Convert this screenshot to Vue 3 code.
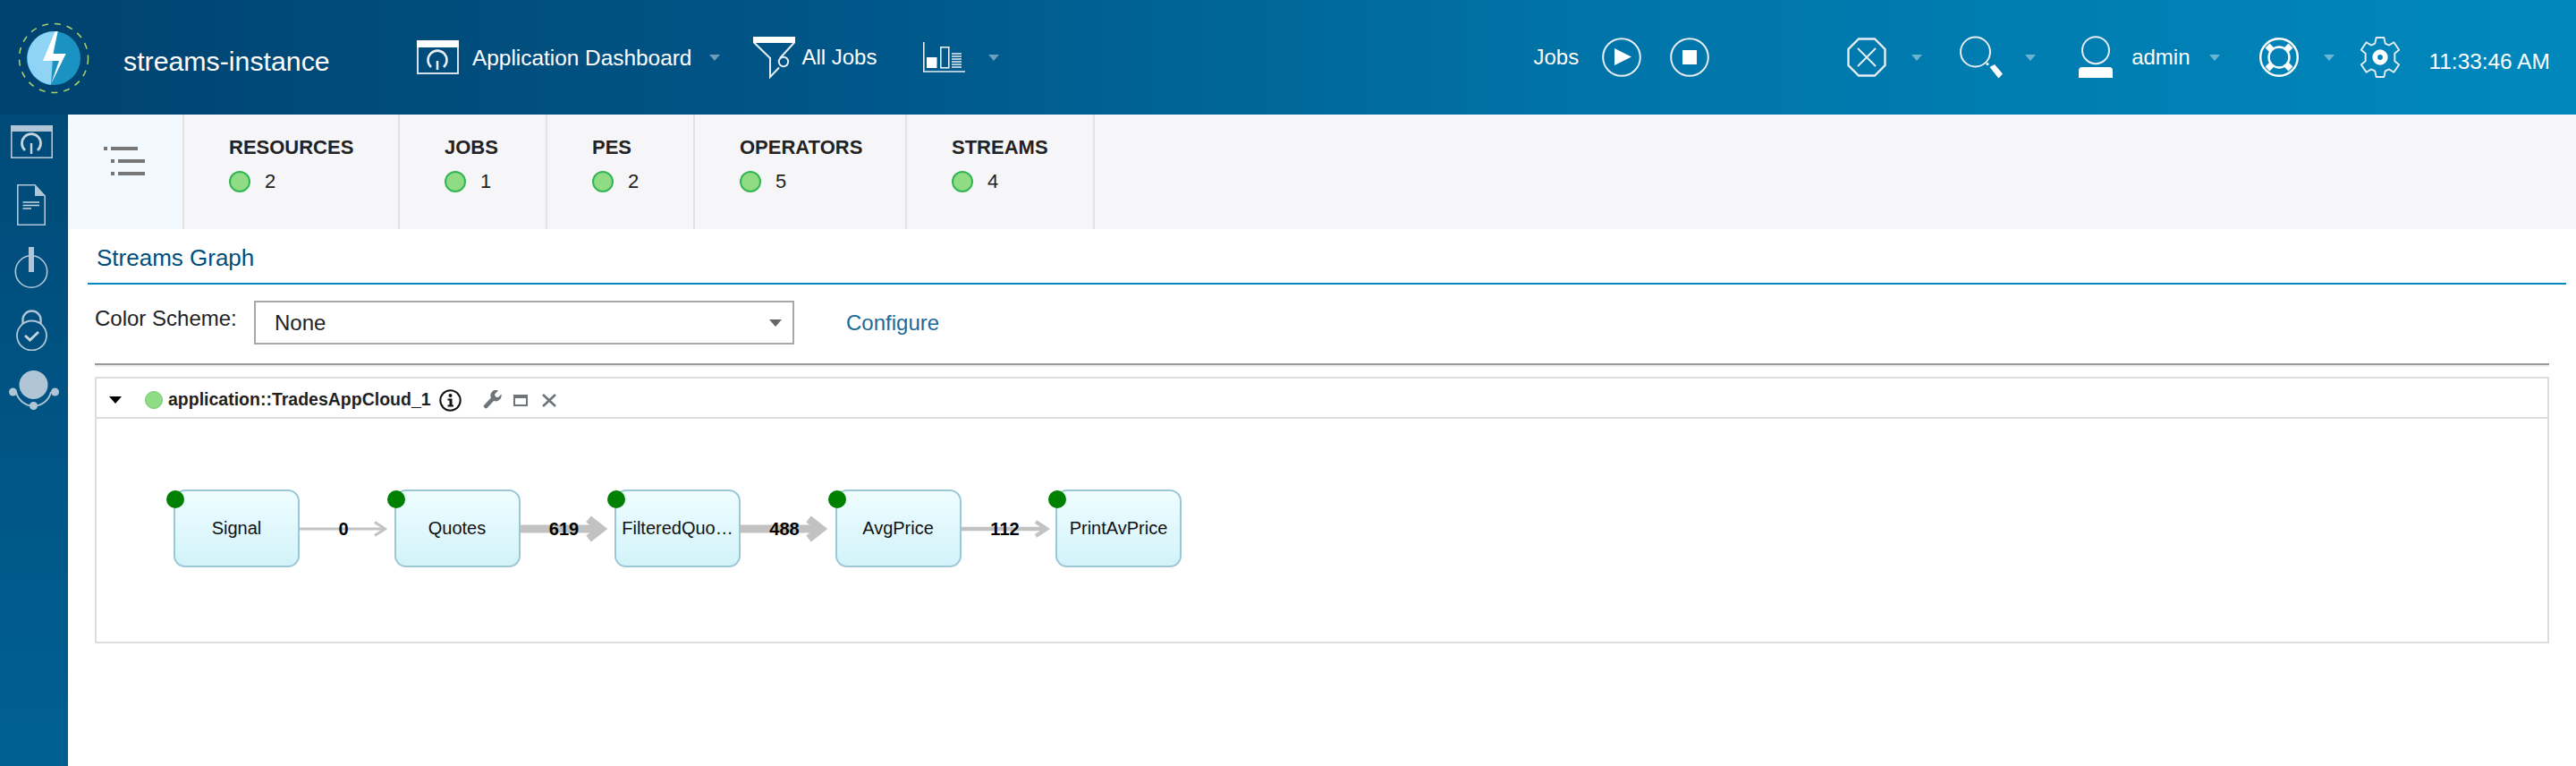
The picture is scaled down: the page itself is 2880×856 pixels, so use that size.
<script setup>
const tabs = [
  { label: 'RESOURCES', count: 2, width: 241 },
  { label: 'JOBS', count: 1, width: 165 },
  { label: 'PES', count: 2, width: 165 },
  { label: 'OPERATORS', count: 5, width: 237 },
  { label: 'STREAMS', count: 4, width: 210 }
]

const nodes = ['Signal', 'Quotes', 'FilteredQuo…', 'AvgPrice', 'PrintAvPrice']

// ax/tx: x of the arrow arm start and tip, dy: half height of the arms
const edges = [
  { value: '0', weight: 3, ax: 84, tx: 95.5, dy: 7.5 },
  { value: '619', weight: 9, ax: 76, tx: 90, dy: 11 },
  { value: '488', weight: 9, ax: 76, tx: 90, dy: 11 },
  { value: '112', weight: 4.5, ax: 83, tx: 95, dy: 8 }
]
</script>

<template>
  <div class="page">
    <header class="topbar">
      <div class="brand">
        <svg class="logo" width="80" height="80" viewBox="0 0 80 80">
          <circle cx="40" cy="40" r="38.500" fill="none" stroke="#a9cf6a" stroke-width="1.600" stroke-dasharray="7 7" />
          <circle cx="40" cy="40" r="30" fill="#1b93c2" />
          <path d="M41 10 A30 30 0 0 0 37 69.800 Z" fill="#8fd3f5" />
          <path d="M41.600 10 L28 43 L46 43 L37 69 L53.700 35 L39.400 35 L44.700 10 Z" fill="#fff" />
        </svg>
        <span class="brand-name">streams-instance</span>
      </div>

      <nav class="nav-left">
        <div class="nav-item dash">
          <svg width="47" height="38" viewBox="0 0 47 38">
            <rect x="1" y="1" width="45" height="36" fill="none" stroke="#d5e2ea" stroke-width="2" />
            <rect x="0" y="0" width="47" height="8" fill="#fff" />
            <path d="M16 30 A10.500 10.500 0 1 1 30 30" fill="none" stroke="#e6eef3" stroke-width="2.600" />
            <path d="M23 23 V33" stroke="#e6eef3" stroke-width="2.600" />
          </svg>
          <span>Application Dashboard</span>
          <i class="caret"></i>
        </div>
        <div class="nav-item jobs">
          <svg width="47" height="47" viewBox="0 0 47 47">
            <path d="M0.500 6 L19 24 M19 23 V45 L29 34.500" fill="none" stroke="#e6eef3" stroke-width="2" />
            <path d="M46.500 6 L30 24" fill="none" stroke="#e6eef3" stroke-width="2" />
            <rect x="0" y="0" width="47" height="7" fill="#fff" />
            <circle cx="34" cy="28" r="5.200" fill="none" stroke="#e6eef3" stroke-width="2" />
          </svg>
          <span>All Jobs</span>
        </div>
        <div class="nav-item chart">
          <svg width="47" height="34" viewBox="0 0 47 34">
            <path d="M0.800 0 V33 H47" fill="none" stroke="#e6eef3" stroke-width="1.600" />
            <rect x="4" y="17" width="11.500" height="12" fill="#fff" />
            <rect x="19.800" y="5.800" width="9" height="23" fill="none" stroke="#e6eef3" stroke-width="1.600" />
            <path d="M32 13 H43 M32 16 H43 M32 19 H43 M32 22 H43 M32 25 H43 M32 28 H43" stroke="#e6eef3" stroke-width="1.400" />
          </svg>
          <i class="caret"></i>
        </div>
      </nav>

      <div class="jobs-actions">
        <span>Jobs</span>
        <svg width="44" height="44" viewBox="0 0 44 44">
          <circle cx="22" cy="22" r="20.800" fill="none" stroke="#e6eef3" stroke-width="2" />
          <path d="M14 12 L33 21.500 L14 31 Z" fill="#fff" />
        </svg>
        <svg width="44" height="44" viewBox="0 0 44 44">
          <circle cx="22" cy="22" r="20.800" fill="none" stroke="#e6eef3" stroke-width="2" />
          <rect x="14" y="14" width="16" height="16" fill="#fff" />
        </svg>
      </div>

      <div class="nav-right">
        <div class="nav-item alert">
          <svg width="44" height="44" viewBox="0 0 44 44">
            <path d="M13 1.500 H31 L42.500 13 V31 L31 42.500 H13 L1.500 31 V13 Z" fill="none" stroke="#e6eef3" stroke-width="2.400" />
            <path d="M12 12 L32 32 M32 12 L12 32" stroke="#e6eef3" stroke-width="2" />
          </svg>
          <i class="caret"></i>
        </div>
        <div class="nav-item search">
          <svg width="48" height="48" viewBox="0 0 48 48">
            <circle cx="17.500" cy="18" r="16.500" fill="none" stroke="#e6eef3" stroke-width="2" />
            <circle cx="31" cy="31.500" r="1.500" fill="#fff" />
            <path d="M33.500 35 L39 32 L48 42.500 L43.500 47.500 Z" fill="#fff" />
          </svg>
          <i class="caret"></i>
        </div>
        <div class="nav-item user">
          <svg width="38" height="48" viewBox="0 0 38 48">
            <circle cx="19" cy="16.200" r="15" fill="none" stroke="#e6eef3" stroke-width="2" />
            <path d="M0 47 V39 Q0 35 4 35 H34 Q38 35 38 39 V47 Z" fill="#fff" />
          </svg>
          <span>admin</span>
          <i class="caret"></i>
        </div>
        <div class="nav-item help">
          <svg width="44" height="44" viewBox="0 0 44 44">
            <circle cx="22" cy="22" r="20.800" fill="none" stroke="#fff" stroke-width="2.400" />
            <circle cx="22" cy="22" r="11.500" fill="none" stroke="#fff" stroke-width="2.400" />
            <path d="M9 9 L14 14 M35 9 L30 14 M9 35 L14 30 M35 35 L30 30" stroke="#fff" stroke-width="7" />
          </svg>
          <i class="caret"></i>
        </div>
        <svg class="gear" width="48" height="48" viewBox="0 0 50 50">
          <path d="M20.500 2 H29.500 L31 9 L35.500 11 L41 7.500 L47 16.500 L42 20.500 V29.500 L47 33.500 L41 42.500 L35.500 39 L31 41 L29.500 48 H20.500 L19 41 L14.500 39 L9 42.500 L3 33.500 L8 29.500 V20.500 L3 16.500 L9 7.500 L14.500 11 L19 9 Z" fill="none" stroke="#e6eef3" stroke-width="2" stroke-linejoin="round" />
          <circle cx="25" cy="25" r="9" fill="#fff" />
          <circle cx="25" cy="25" r="3" fill="#0084b8" />
        </svg>
        <span class="clock">11:33:46 AM</span>
      </div>
    </header>

    <div class="main">
      <aside class="sidebar">
        <svg class="side-dash" width="47" height="37" viewBox="0 0 47 37">
          <rect x="0.800" y="0.800" width="45.400" height="35.400" fill="none" stroke="#b0c6d6" stroke-width="1.600" />
          <rect x="0" y="0" width="47" height="7" fill="#b0c6d6" />
          <path d="M16 28 A10.500 10.500 0 1 1 30 28" fill="none" stroke="#c6d6e0" stroke-width="2.800" />
          <path d="M23 20 V32" stroke="#c6d6e0" stroke-width="2.400" />
        </svg>
        <svg class="side-doc" width="32" height="46" viewBox="0 0 32 46">
          <path d="M0.800 0.800 H20 L31.200 13 V45.200 H0.800 Z" fill="none" stroke="#b0c6d6" stroke-width="1.600" />
          <path d="M20 0.800 L31.200 13 H20 Z" fill="#b0c6d6" />
          <path d="M6.500 20 H25 M6.500 23.500 H25 M6.500 27 H16" stroke="#c6d6e0" stroke-width="1.400" />
        </svg>
        <svg class="side-power" width="38" height="46" viewBox="0 0 38 46">
          <circle cx="19" cy="27.500" r="17.700" fill="none" stroke="#b0c6d6" stroke-width="1.600" />
          <rect x="16" y="0" width="6" height="28" fill="#b0c6d6" />
        </svg>
        <svg class="side-lock" width="35" height="46" viewBox="0 0 35 46">
          <path d="M7.500 17 V11 A10 9.500 0 0 1 27.500 11 V17" fill="none" stroke="#b0c6d6" stroke-width="2.400" />
          <circle cx="17.500" cy="29" r="16.500" fill="#004f7e" stroke="#b0c6d6" stroke-width="1.800" />
          <path d="M10 29 L15.500 34 L25 25" fill="none" stroke="#c6d6e0" stroke-width="2.800" />
        </svg>
        <svg class="side-node" width="56" height="44" viewBox="0 0 56 44">
          <circle cx="27.500" cy="16" r="16" fill="#b0c6d6" />
          <path d="M8 24 A20 20 0 0 0 47 24" fill="none" stroke="#b0c6d6" stroke-width="1.800" />
          <circle cx="4.500" cy="24" r="4.500" fill="#b0c6d6" />
          <circle cx="51.500" cy="24" r="4.500" fill="#b0c6d6" />
          <circle cx="27.500" cy="39.500" r="4.500" fill="#b0c6d6" />
        </svg>
      </aside>

      <div class="content">
        <div class="tabbar">
          <button class="tab-toggle" type="button">
            <svg width="46" height="32" viewBox="0 0 46 32">
              <path d="M0 2 H4 M8 2 H38 M8 16 H12 M16 16 H46 M8 30 H12 M16 30 H46" stroke="#777" stroke-width="4" />
            </svg>
          </button>
          <div v-for="tab in tabs" :key="tab.label" class="tab" :style="{ width: tab.width + 'px' }">
            <div class="tab-label">{{ tab.label }}</div>
            <div class="tab-count"><i class="status"></i>{{ tab.count }}</div>
          </div>
        </div>

        <div class="panel">
          <div class="panel-title">Streams Graph</div>
          <div class="scheme">
            <label>Color Scheme:</label>
            <div class="select">None<i class="select-caret"></i></div>
            <a class="configure">Configure</a>
          </div>
          <div class="rule"></div>

          <section class="graph">
            <div class="graph-head">
              <i class="collapse"></i>
              <i class="status small"></i>
              <span class="graph-name">application::TradesAppCloud_1</span>
              <svg class="info" width="25" height="25" viewBox="0 0 25 25">
                <circle cx="12.500" cy="12.500" r="11.200" fill="none" stroke="#111" stroke-width="2" />
                <circle cx="12.500" cy="7" r="2" fill="#111" />
                <path d="M9.500 10.500 H14.500 V17.500 H16 V19.500 H9.500 V17.500 H11.500 V12.500 H9.500 Z" fill="#111" />
              </svg>
              <svg class="wrench" width="21" height="21" viewBox="0 0 21 21">
                <path d="M0.500 17.500 L9 8.500 A6 6 0 0 1 17 0.500 L13 4.500 L14 7.500 L17 8 L20.500 4.500 A6.500 6.500 0 0 1 12 12 L4 20.500 Q1.500 20.500 0.500 17.500 Z" fill="#6f7478" />
              </svg>
              <svg class="win" width="16" height="13" viewBox="0 0 16 13">
                <rect x="1" y="1" width="14" height="11" fill="none" stroke="#6f7478" stroke-width="2" />
                <rect x="0" y="0" width="16" height="4" fill="#6f7478" />
              </svg>
              <svg class="close" width="18" height="15" viewBox="0 0 18 15">
                <path d="M2 1 L16 14 M16 1 L2 14" stroke="#6f7478" stroke-width="2.600" />
              </svg>
            </div>
            <div class="graph-body">
              <template v-for="(name, i) in nodes" :key="name">
                <div class="node">
                  <i class="node-dot"></i>
                  {{ name }}
                </div>
                <div v-if="edges[i]" class="edge">
                  <svg width="106" height="40" viewBox="0 0 106 40">
                    <path :d="`M0 20 H${edges[i].tx - 1}`" stroke="#c2c2c2" :stroke-width="edges[i].weight" fill="none" />
                    <path
                      :d="`M${edges[i].ax} ${20 - edges[i].dy} L${edges[i].tx} 20 L${edges[i].ax} ${20 + edges[i].dy}`"
                      stroke="#c2c2c2"
                      :stroke-width="edges[i].weight"
                      fill="none"
                    />
                  </svg>
                  <span class="edge-value">{{ edges[i].value }}</span>
                </div>
              </template>
            </div>
          </section>
        </div>
      </div>
    </div>
  </div>
</template>

<style>
html,
body {
  margin: 0;
  background: #fff;
}
</style>

<style scoped>
.page {
  width: 2880px;
  height: 856px;
  overflow: hidden;
  font-family: "Liberation Sans", Arial, sans-serif;
  color: #222;
  font-size: 24px;
  display: flex;
  flex-direction: column;
}

.topbar {
  height: 128px;
  flex: none;
  display: flex;
  align-items: center;
  background: linear-gradient(90deg, #00426f 0%, #00588a 35%, #0074a8 62%, #0088bd 100%);
  color: #fff;
}

.topbar svg {
  flex: none;
  display: block;
}

.brand {
  display: flex;
  align-items: center;
  width: 466px;
  flex: none;
  padding-left: 20px;
  box-sizing: border-box;
}

.logo {
  transform: translateY(1px);
}

.brand-name {
  font-size: 30.3px;
  margin-left: 38px;
  transform: translateY(5px);
}

.nav-left {
  display: flex;
  align-items: center;
  flex: none;
}

.nav-item {
  display: flex;
  align-items: center;
  flex: none;
}

.dash span {
  margin-left: 15px;
  font-size: 24.4px;
  transform: translateY(1px);
}

.caret {
  display: inline-block;
  flex: none;
  width: 0;
  height: 0;
  border-left: 6px solid transparent;
  border-right: 6px solid transparent;
  border-top: 7px solid rgba(255, 255, 255, 0.42);
}

.dash .caret {
  margin-left: 20px;
}

.jobs {
  margin-left: 37px;
}

.jobs span {
  margin-left: 7px;
}

.chart {
  margin-left: 52px;
}

.chart .caret {
  margin-left: 26px;
}

.jobs-actions {
  display: flex;
  align-items: center;
  flex: none;
  margin-left: 597px;
  gap: 32px;
}

.jobs-actions span {
  margin-right: -6px;
}

.nav-right {
  margin-left: 154px;
  display: flex;
  align-items: center;
  flex: none;
}

.alert .caret {
  margin-left: 28px;
}

.search {
  margin-left: 42px;
}

.search .caret {
  margin-left: 25px;
}

.user {
  margin-left: 48px;
}

.user span {
  margin-left: 21px;
}

.user .caret {
  margin-left: 21px;
}

.help {
  margin-left: 44px;
}

.help .caret {
  margin-left: 28px;
}

.gear {
  margin-left: 27px;
}

.clock {
  margin-left: 31px;
  font-size: 24.4px;
  white-space: nowrap;
  transform: translateY(5px);
}

.main {
  flex: 1;
  display: flex;
  min-height: 0;
}

.sidebar {
  width: 76px;
  flex: none;
  background: linear-gradient(180deg, #004a78 0%, #006092 100%);
  display: flex;
  flex-direction: column;
  align-items: center;
  padding: 12px 6px 0 0;
  box-sizing: border-box;
}

.sidebar svg {
  flex: none;
  display: block;
}

.side-doc {
  margin-top: 29px;
}

.side-power,
.side-lock {
  margin-top: 24px;
}

.side-node {
  margin: 22px 0 0 6px;
}

.content {
  flex: 1;
  min-width: 0;
  display: flex;
  flex-direction: column;
}

.tabbar {
  height: 128px;
  flex: none;
  display: flex;
  background: #f6f6f9;
}

.tab-toggle {
  width: 130px;
  height: 128px;
  flex: none;
  box-sizing: border-box;
  border: 0;
  border-right: 2px solid #e3e3e6;
  background: #f3faff;
  margin: 0;
  padding: 36px 0 0 40px;
  display: flex;
  align-items: flex-start;
}

.tab-toggle svg {
  display: block;
  flex: none;
}

.tab {
  box-sizing: border-box;
  border-right: 2px solid #e3e3e6;
  padding: 24px 0 0 50px;
  flex: none;
}

.tab-label {
  font-size: 22px;
  font-weight: 700;
  line-height: 26px;
}

.tab-count {
  display: flex;
  align-items: center;
  margin-top: 12px;
  font-size: 22px;
  line-height: 26px;
}

.status {
  display: inline-block;
  flex: none;
  width: 24px;
  height: 24px;
  box-sizing: border-box;
  border-radius: 50%;
  background: #90dc85;
  border: 2px solid #33b552;
  margin-right: 16px;
}

.panel {
  flex: 1;
  padding: 0 11px 0 22px;
}

.panel-title {
  height: 60px;
  line-height: 64px;
  padding-left: 10px;
  border-bottom: 2px solid #0088bf;
  color: #004e7c;
  font-size: 26px;
}

.scheme {
  display: flex;
  align-items: flex-start;
  margin-top: 18px;
  padding-left: 8px;
}

.scheme label {
  line-height: 28px;
  margin-top: 6px;
  width: 178px;
}

.select {
  box-sizing: border-box;
  width: 604px;
  height: 49px;
  border: 2px solid #a8a8a8;
  padding-left: 21px;
  line-height: 46px;
  position: relative;
  background: #fff;
}

.select-caret {
  position: absolute;
  right: 12px;
  top: 19px;
  width: 0;
  height: 0;
  border-left: 7px solid transparent;
  border-right: 7px solid transparent;
  border-top: 8px solid #666;
}

.configure {
  margin-left: 58px;
  line-height: 50px;
  color: #1c6a99;
}

.rule {
  margin: 20px 19px 0 8px;
  height: 2px;
  background: #999;
  border-bottom: 2px solid #eee;
}

.graph {
  margin: 11px 19px 0 8px;
  height: 298px;
  box-sizing: border-box;
  border: 2px solid #ddd;
}

.graph-head {
  height: 45px;
  box-sizing: border-box;
  border-bottom: 2px solid #ddd;
  display: flex;
  align-items: center;
  padding: 4px 0 0 14px;
}

.graph-head svg {
  display: block;
  flex: none;
}

.collapse {
  width: 0;
  height: 0;
  border-left: 7px solid transparent;
  border-right: 7px solid transparent;
  border-top: 8px solid #000;
  margin-right: 26px;
}

.status.small {
  width: 20px;
  height: 20px;
  background: #8fdc85;
  border: 1px solid #6fce70;
  margin-right: 6px;
}

.graph-name {
  font-size: 19.5px;
  font-weight: 700;
  color: #1f1f1f;
}

.info {
  margin: 2px 0 0 9px;
}

.wrench {
  margin: 0 0 0 24px;
}

.win {
  margin: 2px 0 0 13px;
}

.close {
  margin: 2px 0 0 15px;
}

.graph-body {
  display: flex;
  align-items: flex-start;
  padding: 79px 0 0 86px;
}

.node {
  position: relative;
  width: 141px;
  height: 87px;
  flex: none;
  box-sizing: border-box;
  border: 2px solid #9bc8d4;
  border-radius: 13px;
  background: linear-gradient(180deg, #eefdff 0%, #d2f3fa 100%);
  display: flex;
  align-items: center;
  justify-content: center;
  font-size: 20px;
  color: #111;
}

.node-dot {
  position: absolute;
  left: -10px;
  top: -1px;
  width: 20px;
  height: 20px;
  border-radius: 50%;
  background: #008000;
}

.edge {
  position: relative;
  width: 105.5px;
  height: 87px;
  flex: none;
  display: flex;
  align-items: center;
}

.edge svg {
  display: block;
  flex: none;
}

.edge-value {
  position: absolute;
  left: 49px;
  top: 50%;
  transform: translate(-50%, -50%);
  font-size: 20px;
  font-weight: 700;
  color: #000;
}
</style>
